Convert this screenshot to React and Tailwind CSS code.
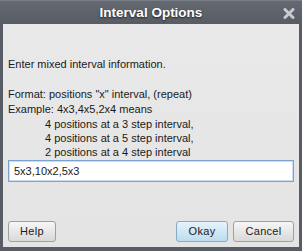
export default function App() {
  const font = { fontFamily: '"Liberation Sans", Arial, sans-serif' }

  return (
    <div className="w-[302px] h-[251px] bg-[#585c64] px-[3px] pb-[4px] flex flex-col overflow-hidden" style={font}>
      {/* Title bar */}
      <div className="h-[24px] shrink-0 relative flex items-center justify-center bg-gradient-to-b from-[#646871] to-[#585c65] border-t border-[#7a7e86] -mx-[3px]">
        <span className="text-white font-bold text-[13.5px] leading-none [text-shadow:0_1px_2px_rgba(0,0,0,0.7)]">
          Interval Options
        </span>
        <svg className="absolute right-[7px] top-[7px]" width="12" height="11" viewBox="0 0 12 11">
          <path d="M2 1.5 L10 9.5 M10 1.5 L2 9.5" stroke="#c9cbcf" strokeWidth="3" strokeLinecap="round" />
        </svg>
      </div>

      {/* Body */}
      <div className="flex-1 flex flex-col bg-gradient-to-b from-[#e9e9e9] to-[#e4e4e4] px-[5px] text-[11px] text-[#1a1a1a] leading-[15px]">
        <p className="mt-[33px]">Enter mixed interval information.</p>
        <p className="mt-[15px]">Format: positions "x" interval, (repeat)</p>
        <p>Example: 4x3,4x5,2x4 means</p>
        <div className="pl-[37px] leading-[14px]">
          <p>4 positions at a 3 step interval,</p>
          <p>4 positions at a 5 step interval,</p>
          <p>2 positions at a 4 step interval</p>
        </div>
        <input
          type="text"
          defaultValue="5x3,10x2,5x3"
          className="mt-[1px] h-[22px] w-full bg-white border border-[#7aa3cf] shadow-[inset_0_0_0_1px_#c9dcf0] px-[5px] text-[11px] text-[#1a1a1a] outline-none"
          style={font}
        />

        <div className="mt-auto mb-[5px] flex items-center">
          <button className="w-[48px] h-[21px] rounded-[3px] border border-[#a0a0a0] bg-gradient-to-b from-[#f6f6f6] to-[#d9d9d9] text-[11px] tracking-[0.3px] text-[#1a1a1a]">
            Help
          </button>
          <div className="flex-1" />
          <button className="w-[52px] h-[21px] rounded-[3px] border border-[#8aa9c4] bg-gradient-to-b from-[#e6f3fb] to-[#bcdcf0] text-[11px] tracking-[0.3px] text-[#1a1a1a]">
            Okay
          </button>
          <button className="ml-[5px] w-[61px] h-[21px] rounded-[3px] border border-[#a0a0a0] bg-gradient-to-b from-[#f6f6f6] to-[#d9d9d9] text-[11px] tracking-[0.3px] text-[#1a1a1a]">
            Cancel
          </button>
        </div>
      </div>
    </div>
  )
}
